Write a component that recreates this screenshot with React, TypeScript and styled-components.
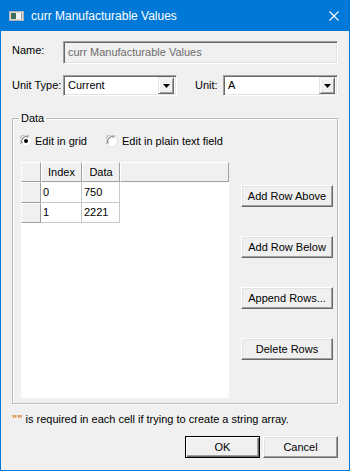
import React from "react";
import styled, { createGlobalStyle } from "styled-components";

const GlobalStyle = createGlobalStyle`
  html, body {
    margin: 0;
    padding: 0;
    background: #ffffff;
  }
  * {
    box-sizing: border-box;
  }
`;

const Window = styled.div`
  width: 350px;
  height: 471px;
  border: 1px solid #0078d7;
  background: #f0f0f0;
  display: flex;
  flex-direction: column;
  font-family: "Liberation Sans", Arial, sans-serif;
  font-size: 11px;
  line-height: 13px;
  color: #000;
`;

const TitleBar = styled.div`
  height: 30px;
  flex: none;
  background: #0078d7;
  color: #fff;
  display: flex;
  align-items: center;
  padding: 0 10px 0 8px;
  font-size: 12px;
`;

const TitleText = styled.span`
  flex: 1;
  margin-left: 7px;
  white-space: nowrap;
`;

const Body = styled.div`
  flex: 1;
  display: flex;
  flex-direction: column;
  padding: 10px 11px 0 11px;
`;

const Row = styled.div<{ $top?: number; $height: number }>`
  display: flex;
  align-items: ${({ $height }) => ($height > 22 ? "flex-start" : "center")};
  height: ${({ $height }) => $height}px;
  margin-top: ${({ $top }) => $top ?? 0}px;
`;

const Label = styled.span<{ $width: number; $pad?: number }>`
  width: ${({ $width }) => $width}px;
  flex: none;
  padding-top: ${({ $pad }) => $pad ?? 0}px;
  white-space: nowrap;
`;

const Sunken = styled.div<{ $width: number; $disabled?: boolean }>`
  width: ${({ $width }) => $width}px;
  height: 100%;
  flex: none;
  border: 1px solid;
  border-color: #a0a0a0 #ffffff #ffffff #a0a0a0;
  box-shadow: inset 1px 1px #696969, inset -1px -1px #e3e3e3;
  background: ${({ $disabled }) => ($disabled ? "#f0f0f0" : "#ffffff")};
  color: ${({ $disabled }) => ($disabled ? "#6d6d6d" : "#000")};
  display: flex;
  align-items: center;
  padding: 0 2px 0 4px;
  white-space: nowrap;
`;

const ComboText = styled.span`
  flex: 1;
`;

const DropButton = styled.div`
  width: 16px;
  height: 17px;
  border: 1px solid;
  border-color: #e3e3e3 #696969 #696969 #e3e3e3;
  box-shadow: inset 1px 1px #ffffff, inset -1px -1px #a0a0a0;
  background: #f0f0f0;
  display: flex;
  align-items: center;
  justify-content: center;
`;

const Spacer = styled.div<{ $w: number }>`
  width: ${({ $w }) => $w}px;
  flex: none;
`;

const Group = styled.fieldset`
  margin: 16px 0 0 0;
  padding: 9px 4px 5px 8px;
  border: 1px solid #bcbcbc;
  box-shadow: inset 1px 1px #ffffff, 1px 1px #ffffff;
  min-width: 0;
  display: flex;
  flex-direction: column;
`;

const Legend = styled.legend`
  padding: 0 2px;
  margin-left: -2px;
  line-height: 13px;
`;

const RadioRow = styled.div`
  display: flex;
  align-items: center;
  height: 14px;
  margin-left: -1px;
`;

const RadioOption = styled.label<{ $gap: number }>`
  display: flex;
  align-items: center;
  gap: ${({ $gap }) => $gap}px;
  margin-right: 19px;
`;

const DataArea = styled.div`
  display: flex;
  margin-top: 14px;
  gap: 12px;
`;

const Grid = styled.div`
  width: 208px;
  height: 236px;
  background: #ffffff;
  display: grid;
  grid-template-columns: 20px 41px 38px 1fr;
  grid-template-rows: 20px 21px 20px;
  align-content: start;
`;

const HeadCell = styled.div`
  background: #f0f0f0;
  border-top: 1px solid #ffffff;
  border-left: 1px solid #ffffff;
  border-right: 1px solid #a0a0a0;
  border-bottom: 1px solid #a0a0a0;
  display: flex;
  align-items: center;
  justify-content: center;
`;

const Cell = styled.div`
  border-right: 1px solid #c8c8c8;
  border-bottom: 1px solid #c8c8c8;
  display: flex;
  align-items: center;
  padding-left: 2px;
`;

const ButtonColumn = styled.div`
  display: flex;
  flex-direction: column;
  padding-top: 23px;
  gap: 29px;
`;

const Button = styled.button<{ $width: number; $default?: boolean }>`
  width: ${({ $width }) => $width}px;
  height: 22px;
  padding: 0;
  margin: 0;
  font-family: "Liberation Sans", Arial, sans-serif;
  font-size: 11px;
  color: #000;
  background: #f0f0f0;
  border: 1px solid;
  border-color: ${({ $default }) =>
    $default ? "#000 #000 #000 #000" : "#ffffff #696969 #696969 #ffffff"};
  box-shadow: ${({ $default }) =>
    $default
      ? "inset 1px 1px #ffffff, inset -1px -1px #696969, inset -2px -2px #a0a0a0"
      : "inset -1px -1px #a0a0a0, inset 1px 1px #e3e3e3"};
`;

const Note = styled.div`
  margin-top: 9px;
  white-space: nowrap;
`;

const Quotes = styled.span`
  color: #d9821f;
  font-weight: bold;
`;

const Footer = styled.div`
  display: flex;
  justify-content: flex-end;
  gap: 3px;
  margin-top: 10px;
`;

const AppIcon = () => (
  <svg width="15" height="10" viewBox="0 0 15 10">
    <rect x="0.5" y="0.5" width="14" height="9" fill="#dcdcdc" stroke="#b4b4b4" />
    <rect x="2" y="2" width="5" height="6" fill="#3f6f58" />
    <rect x="7" y="2" width="5" height="6" fill="#f4f4f4" />
    <rect x="12" y="2" width="1" height="6" fill="#8aa89a" />
  </svg>
);

const CloseIcon = () => (
  <svg width="10" height="10" viewBox="0 0 10 10">
    <path d="M0.5 0.5 L9.5 9.5 M9.5 0.5 L0.5 9.5" stroke="#fff" strokeWidth="1.1" />
  </svg>
);

const Arrow = () => (
  <svg width="7" height="4" viewBox="0 0 7 4">
    <path d="M0 0 H7 L3.5 4 Z" fill="#000" />
  </svg>
);

const Radio = ({ checked }: { checked?: boolean }) => (
  <svg width="12" height="12" viewBox="0 0 12 12">
    <circle cx="6" cy="6" r="5.5" fill="#ffffff" stroke="#e3e3e3" />
    <path d="M1.2 9 A5.5 5.5 0 0 1 9 1.2" fill="none" stroke="#a0a0a0" />
    <path d="M2.2 8.3 A4.5 4.5 0 0 1 8.3 2.2" fill="none" stroke="#696969" />
    {checked && <circle cx="6" cy="6" r="2" fill="#000" />}
  </svg>
);

const ComboBox = ({ value, width }: { value: string; width: number }) => (
  <Sunken $width={width}>
    <ComboText>{value}</ComboText>
    <DropButton>
      <Arrow />
    </DropButton>
  </Sunken>
);

const rows = [
  { index: "0", data: "750" },
  { index: "1", data: "2221" },
];

const App: React.FC = () => {
  return (
    <>
      <GlobalStyle />
      <Window>
        <TitleBar>
          <AppIcon />
          <TitleText>curr Manufacturable Values</TitleText>
          <CloseIcon />
        </TitleBar>
        <Body>
          <Row $height={23}>
            <Label $width={51} $pad={3}>
              Name:
            </Label>
            <Sunken $width={275} $disabled>
              curr Manufacturable Values
            </Sunken>
          </Row>
          <Row $top={11} $height={21}>
            <Label $width={51}>Unit Type:</Label>
            <ComboBox value="Current" width={114} />
            <Spacer $w={18} />
            <Label $width={28}>Unit:</Label>
            <ComboBox value="A" width={115} />
          </Row>

          <Group>
            <Legend>Data</Legend>
            <RadioRow>
              <RadioOption $gap={3}>
                <Radio checked />
                Edit in grid
              </RadioOption>
              <RadioOption $gap={4}>
                <Radio />
                Edit in plain text field
              </RadioOption>
            </RadioRow>
            <DataArea>
              <Grid>
                <HeadCell />
                <HeadCell>Index</HeadCell>
                <HeadCell>Data</HeadCell>
                <HeadCell />
                {rows.map((r) => (
                  <React.Fragment key={r.index}>
                    <HeadCell />
                    <Cell>{r.index}</Cell>
                    <Cell>{r.data}</Cell>
                    <div />
                  </React.Fragment>
                ))}
              </Grid>
              <ButtonColumn>
                <Button $width={92}>Add Row Above</Button>
                <Button $width={92}>Add Row Below</Button>
                <Button $width={92}>Append Rows...</Button>
                <Button $width={92}>Delete Rows</Button>
              </ButtonColumn>
            </DataArea>
          </Group>

          <Note>
            <Quotes>""</Quotes> is required in each cell if trying to create a string array.
          </Note>
          <Footer>
            <Button $width={75} $default>
              OK
            </Button>
            <Button $width={75}>Cancel</Button>
          </Footer>
        </Body>
      </Window>
    </>
  );
};

export default App;
